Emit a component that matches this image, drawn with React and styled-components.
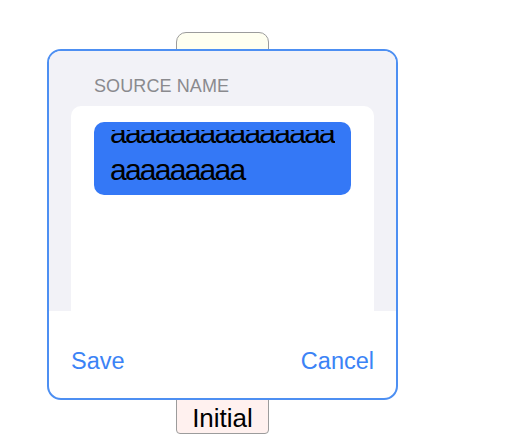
import React from "react";
import styled, { createGlobalStyle } from "styled-components";

const Global = createGlobalStyle`
  html, body { margin: 0; padding: 0; background: #ffffff; overflow: hidden; }
  body { font-family: "Liberation Sans", Arial, sans-serif; }
`;

const Page = styled.div`
  position: relative;
  width: 445px;
  height: 434px;
  display: flex;
  flex-direction: column;
  align-items: center;
`;

const TopButton = styled.button`
  box-sizing: border-box;
  margin-top: 32px;
  width: 93px;
  height: 44px;
  border: 1px solid #9c9c9c;
  border-radius: 10px;
  background: #fffff0;
  padding: 0;
`;

const InitialButton = styled.button`
  box-sizing: border-box;
  margin-top: 324px;
  width: 93px;
  height: 44px;
  border: 1px solid #9c9c9c;
  border-radius: 4px;
  background: #fff1ef;
  padding: 7px 0 0;
  display: flex;
  justify-content: center;
  align-items: flex-start;
  font-family: "Liberation Sans", Arial, sans-serif;
  font-size: 26px;
  line-height: 30px;
  color: #000;
`;

const Modal = styled.div`
  position: absolute;
  left: 47px;
  top: 49px;
  box-sizing: border-box;
  width: 351px;
  height: 351px;
  border: 2px solid #4d8ff2;
  border-radius: 14px;
  background: #ffffff;
  overflow: hidden;
  display: flex;
  flex-direction: column;
`;

const Section = styled.div`
  box-sizing: border-box;
  height: 260px;
  background: #f2f2f7;
  padding: 24px 22px 0;
  display: flex;
  flex-direction: column;
`;

const Label = styled.div`
  padding-left: 23px;
  font-size: 18px;
  line-height: 22px;
  color: #8a8a8e;
  letter-spacing: 0.1px;
`;

const Card = styled.div`
  margin-top: 9px;
  flex: 1;
  background: #ffffff;
  border-radius: 10px 10px 0 0;
  padding: 16px 23px 0;
`;

const Selection = styled.div`
  box-sizing: border-box;
  height: 73px;
  border-radius: 10px;
  background: #3478f6;
  padding: 8px 16px 0;
`;

const Viewport = styled.div`
  height: 65px;
  overflow: hidden;
`;

const Text = styled.div`
  margin-top: -16px;
  font-size: 30px;
  line-height: 37px;
  letter-spacing: -1.75px;
  color: #000;
  word-break: break-all;
`;

const Footer = styled.div`
  flex: 1;
  display: flex;
  justify-content: space-between;
  align-items: flex-start;
  padding: 36px 22px 0;
`;

const Action = styled.span`
  font-size: 23.5px;
  line-height: 28px;
  color: #3b83f6;
`;

export default function App() {
  return (
    <>
      <Global />
      <Page>
        <TopButton />
        <InitialButton>Initial</InitialButton>
        <Modal>
          <Section>
            <Label>SOURCE NAME</Label>
            <Card>
              <Selection>
                <Viewport>
                  <Text>aaaaaaaaaaaaaaaaaaaaaaaa</Text>
                </Viewport>
              </Selection>
            </Card>
          </Section>
          <Footer>
            <Action>Save</Action>
            <Action>Cancel</Action>
          </Footer>
        </Modal>
      </Page>
    </>
  );
}
